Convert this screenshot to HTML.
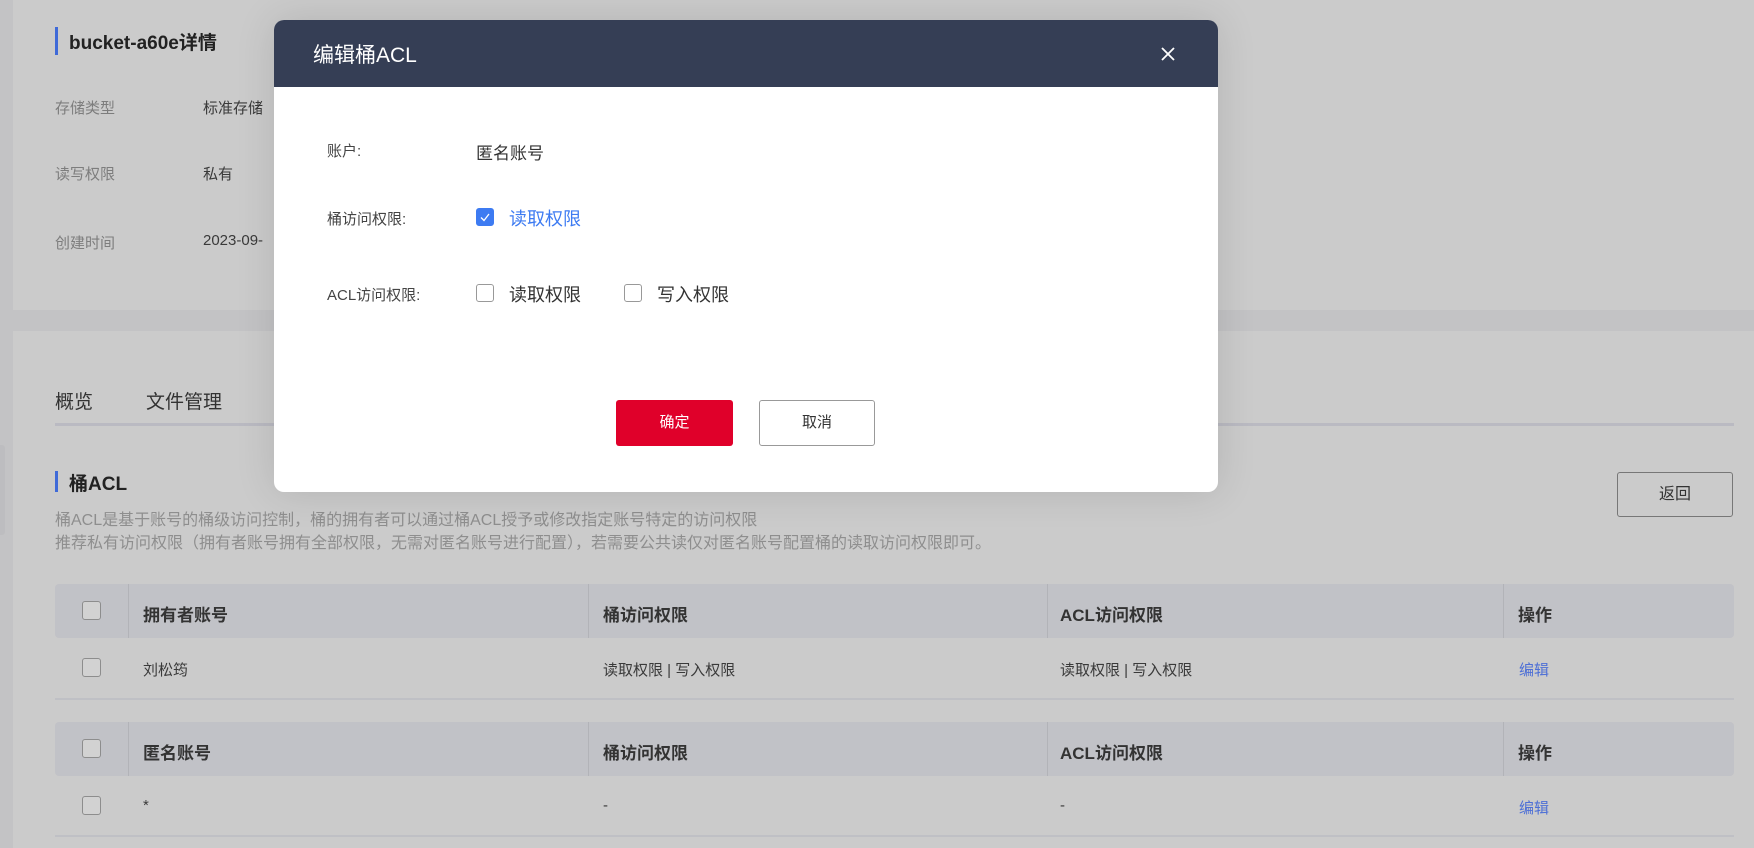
<!DOCTYPE html>
<html><head><meta charset="utf-8"><style>
*{box-sizing:border-box;margin:0;padding:0}
body{width:1754px;height:848px;overflow:hidden;background:#c3c3c5;font-family:"Liberation Sans","Noto Sans CJK SC",sans-serif;position:relative;color:#333}
.abs{position:absolute}
.panel{position:absolute;left:13px;right:0;background:#cbcbcb}
.lbl{color:#7d7d7d;font-size:15px}
.val{color:#3a3a3a;font-size:15px}
.bar{position:absolute;width:3px;background:#3f6ad8}
.th{position:absolute;left:55px;width:1679px;background:#c1c2c7;border-radius:4px}
.cb{position:absolute;width:19px;height:19px;border:1px solid #8d8d8d;border-radius:3px;background:#d2d2d2}
.row{position:absolute;left:55px;width:1679px;border-bottom:2px solid #bfc0c5}
.h{position:absolute;font-size:17px;font-weight:bold;color:#333}
.t{position:absolute;font-size:15px;color:#3a3a3a}
.div{position:absolute;width:1px;background:#b2b3b8}
.modal{position:absolute;left:274px;top:20px;width:944px;height:472px;background:#fff;border-radius:10px;overflow:hidden;box-shadow:0 0 40px rgba(0,0,0,.12)}
.mh{height:67px;background:#353e55;color:#fff;font-size:21px;padding:19px 0 0 39px}
.mcb{position:absolute;width:18px;height:18px;border:1px solid #999;border-radius:3px;background:#fff}
</style></head><body>
<div class="panel" style="top:0;height:310px"></div>
<div class="panel" style="top:331px;height:517px"></div>
<div class="abs" style="left:0;top:445px;width:5px;height:90px;background:#bdbdc0;border-radius:0 3px 3px 0"></div>

<div class="bar" style="left:55px;top:27px;height:28px"></div>
<div class="abs" style="left:69px;top:28px;font-size:19px;font-weight:bold;color:#222">bucket-a60e详情</div>
<div class="abs lbl" style="left:55px;top:97px">存储类型</div><div class="abs val" style="left:203px;top:97px">标准存储</div>
<div class="abs lbl" style="left:55px;top:163px">读写权限</div><div class="abs val" style="left:203px;top:163px">私有</div>
<div class="abs lbl" style="left:55px;top:232px">创建时间</div><div class="abs val" style="left:203px;top:232px">2023-09-</div>

<div class="abs" style="left:55px;top:387px;font-size:19px;color:#333">概览</div>
<div class="abs" style="left:146px;top:387px;font-size:19px;color:#333">文件管理</div>
<div class="abs" style="left:55px;top:423px;width:1679px;height:3px;background:#babac2"></div>

<div class="bar" style="left:55px;top:471px;height:21px"></div>
<div class="abs" style="left:69px;top:469px;font-size:19px;font-weight:bold;color:#222">桶ACL</div>
<div class="abs" style="left:55px;top:509px;font-size:16px;color:#8e8e8e;line-height:23px">桶ACL是基于账号的桶级访问控制，桶的拥有者可以通过桶ACL授予或修改指定账号特定的访问权限<br>推荐私有访问权限（拥有者账号拥有全部权限，无需对匿名账号进行配置），若需要公共读仅对匿名账号配置桶的读取访问权限即可。</div>
<div class="abs" style="left:1617px;top:472px;width:116px;height:45px;border:1px solid #777;border-radius:3px;font-size:16px;text-align:center;line-height:43px;color:#333">返回</div>

<!-- table 1 -->
<div class="th" style="top:584px;height:54px"></div>
<div class="div" style="left:128px;top:584px;height:54px"></div><div class="div" style="left:588px;top:584px;height:54px"></div><div class="div" style="left:1047px;top:584px;height:54px"></div><div class="div" style="left:1503px;top:584px;height:54px"></div>
<div class="cb" style="left:82px;top:601px"></div>
<div class="h" style="left:143px;top:601px">拥有者账号</div><div class="h" style="left:603px;top:601px">桶访问权限</div><div class="h" style="left:1060px;top:601px">ACL访问权限</div><div class="h" style="left:1518px;top:601px">操作</div>
<div class="row" style="top:638px;height:62px"></div>
<div class="cb" style="left:82px;top:658px"></div>
<div class="t" style="left:143px;top:659px">刘松筠</div><div class="t" style="left:603px;top:659px">读取权限 | 写入权限</div><div class="t" style="left:1060px;top:659px">读取权限 | 写入权限</div><div class="t" style="left:1519px;top:659px;color:#4d6fd6">编辑</div>
<!-- table 2 -->
<div class="th" style="top:722px;height:54px"></div>
<div class="div" style="left:128px;top:722px;height:54px"></div><div class="div" style="left:588px;top:722px;height:54px"></div><div class="div" style="left:1047px;top:722px;height:54px"></div><div class="div" style="left:1503px;top:722px;height:54px"></div>
<div class="cb" style="left:82px;top:739px"></div>
<div class="h" style="left:143px;top:739px">匿名账号</div><div class="h" style="left:603px;top:739px">桶访问权限</div><div class="h" style="left:1060px;top:739px">ACL访问权限</div><div class="h" style="left:1518px;top:739px">操作</div>
<div class="row" style="top:776px;height:61px"></div>
<div class="cb" style="left:82px;top:796px"></div>
<div class="t" style="left:143px;top:797px">*</div><div class="t" style="left:603px;top:797px">-</div><div class="t" style="left:1060px;top:797px">-</div><div class="t" style="left:1519px;top:797px;color:#4d6fd6">编辑</div>

<!-- modal -->
<div class="modal">
 <div class="mh">编辑桶ACL</div>
 <svg class="abs" style="left:886px;top:26px" width="16" height="16" viewBox="0 0 16 16"><path d="M2 2L14 14M14 2L2 14" stroke="#fff" stroke-width="1.8"/></svg>
 <div class="abs" style="left:53px;top:120px;font-size:15px;color:#444">账户:</div>
 <div class="abs" style="left:202px;top:119px;font-size:17px;color:#333">匿名账号</div>
 <div class="abs" style="left:53px;top:188px;font-size:15px;color:#444">桶访问权限:</div>
 <div class="mcb" style="left:202px;top:188px;background:#3d7bf2;border-color:#3d7bf2"><svg width="16" height="16" viewBox="0 0 16 16" style="position:absolute;left:0;top:0"><path d="M4 8.5L7 11.5L12 5" stroke="#fff" stroke-width="1.3" fill="none"/></svg></div>
 <div class="abs" style="left:235px;top:185px;font-size:18px;color:#3d7bf2">读取权限</div>
 <div class="abs" style="left:53px;top:264px;font-size:15px;color:#444">ACL访问权限:</div>
 <div class="mcb" style="left:202px;top:264px"></div>
 <div class="abs" style="left:235px;top:261px;font-size:18px;color:#333">读取权限</div>
 <div class="mcb" style="left:350px;top:264px"></div>
 <div class="abs" style="left:383px;top:261px;font-size:18px;color:#333">写入权限</div>
 <div class="abs" style="left:342px;top:380px;width:117px;height:46px;background:#e0002a;border-radius:3px;color:#fff;font-size:15px;text-align:center;line-height:46px">确定</div>
 <div class="abs" style="left:485px;top:380px;width:116px;height:46px;border:1px solid #999;border-radius:3px;color:#333;font-size:15px;text-align:center;line-height:44px">取消</div>
</div>
</body></html>
